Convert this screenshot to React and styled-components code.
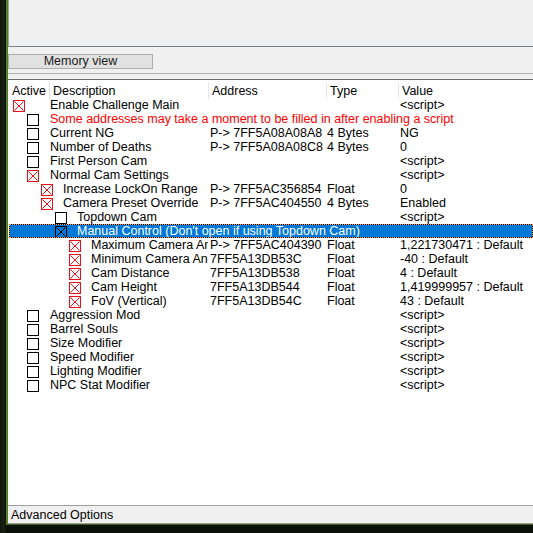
import React from 'react';
import styled, { createGlobalStyle } from 'styled-components';

const GlobalStyle = createGlobalStyle`
  html, body {
    margin: 0;
    padding: 0;
    background: #0b1108;
  }
  body {
    font-family: "Liberation Sans", Arial, sans-serif;
    font-size: 12.5px;
    color: #000;
  }
`;

const COLS = '41px 159px 118px 72px 1fr';

const Desktop = styled.div`
  width: 533px;
  height: 533px;
  overflow: hidden;
  background: linear-gradient(90deg, #10160c 0px, #1a2212 4px, #0b1108 6px);
`;

const Window = styled.div`
  margin-left: 6px;
  width: 527px;
  height: 525px;
  border-left: 2px solid #56802a;
  border-bottom: 1px solid #3f5f1e;
  background: #f0f0f0;
  display: flex;
  flex-direction: column;
  box-sizing: border-box;
`;

const TopPanel = styled.div`
  height: 46px;
  flex: none;
  border-left: 1px solid #a0a0a0;
  border-bottom: 1px solid #7b8189;
  background: #f0f0f0;
`;

const Toolbar = styled.div`
  flex: none;
  height: 27px;
  padding-top: 7px;
  box-sizing: border-box;
  border-bottom: 1px solid #b0b0b0;
`;

const Button = styled.div`
  width: 145px;
  height: 15px;
  box-sizing: border-box;
  border: 1px solid #adadad;
  background: #e1e1e1;
  display: flex;
  align-items: center;
  justify-content: center;
  line-height: 13px;
  color: #1a1a1a;
`;

const Splitter = styled.div`
  flex: none;
  height: 5px;
  border-bottom: 1px solid #6a6a6a;
`;

const List = styled.div`
  flex: 1;
  background: #fff;
  overflow: hidden;
`;

const Header = styled.div`
  display: grid;
  grid-template-columns: ${COLS};
  height: 18px;
  align-items: center;
`;

const HeadCell = styled.div`
  height: 16px;
  margin-top: 3px;
  padding-left: ${p => (p.$first ? 4 : 3)}px;
  border-left: ${p => (p.$first ? 'none' : '1px solid #e3e3e3')};
  line-height: 16px;
  white-space: nowrap;
  overflow: hidden;
`;

const Row = styled.div`
  display: grid;
  grid-template-columns: ${COLS};
  height: 14px;
  line-height: 14px;
  box-sizing: border-box;
  margin-left: ${p => (p.$selected ? 1 : 0)}px;
  color: ${p => (p.$selected ? '#fff' : '#000')};
  border: ${p => (p.$selected ? '1px dotted #f3a13a' : 'none')};
  background: ${p =>
    p.$selected
      ? 'linear-gradient(#0078d7, #0078d7) padding-box, linear-gradient(#000, #000) border-box'
      : 'transparent'};
`;

const DescCell = styled.div`
  grid-column: ${p => (p.$span ? '1 / -1' : '1 / 3')};
  display: flex;
  align-items: flex-start;
  padding-left: ${p => p.$indent}px;
  overflow: hidden;
  white-space: nowrap;
  margin-top: ${p => (p.$selected ? -1 : 0)}px;
`;

const Label = styled.span`
  margin-left: ${p => p.$gap}px;
  color: ${p => (p.$note ? '#ff0000' : 'inherit')};
`;

const Cell = styled.div`
  padding-left: ${p => p.$pad}px;
  white-space: nowrap;
  overflow: hidden;
`;

const Box = styled.span`
  flex: none;
  width: 12px;
  height: 12px;
  margin-top: 2px;
  box-sizing: border-box;
  border: 1px solid ${p => p.$color};
  background: ${p => (p.$selected ? 'transparent' : '#fff')};
  display: block;
  svg {
    display: block;
  }
`;

const Footer = styled.div`
  flex: none;
  height: 19px;
  box-sizing: border-box;
  border-top: 1px solid #a0a0a0;
  border-bottom: 1px solid #9a9a9a;
  padding-left: 3px;
  line-height: 18px;
  background: #f0f0f0;
`;

function Check({ checked, selected }) {
  const color = selected ? '#000' : checked ? '#e5141a' : '#000';
  return (
    <Box $color={color} $selected={selected}>
      {checked && (
        <svg width="10" height="10" viewBox="0 0 10 10">
          <path d="M0.5 0.5 L9.5 9.5 M9.5 0.5 L0.5 9.5" stroke={color} strokeWidth="1" />
        </svg>
      )}
    </Box>
  );
}

const rows = [
  { level: 0, checked: true, desc: 'Enable Challenge Main', value: '<script>' },
  { level: 1, note: true, desc: 'Some addresses may take a moment to be filled in after enabling a script' },
  { level: 1, desc: 'Current NG', address: 'P-> 7FF5A08A08A8', type: '4 Bytes', value: 'NG' },
  { level: 1, desc: 'Number of Deaths', address: 'P-> 7FF5A08A08C8', type: '4 Bytes', value: '0' },
  { level: 1, desc: 'First Person Cam', value: '<script>' },
  { level: 1, checked: true, desc: 'Normal Cam Settings', value: '<script>' },
  { level: 2, checked: true, desc: 'Increase LockOn Range', address: 'P-> 7FF5AC356854', type: 'Float', value: '0' },
  { level: 2, checked: true, desc: 'Camera Preset Override', address: 'P-> 7FF5AC404550', type: '4 Bytes', value: 'Enabled' },
  { level: 3, desc: 'Topdown Cam', value: '<script>' },
  { level: 3, checked: true, selected: true, desc: "Manual Control (Don't open if using Topdown Cam)" },
  { level: 4, checked: true, desc: 'Maximum Camera Angle', address: 'P-> 7FF5AC404390', type: 'Float', value: '1,221730471 : Default' },
  { level: 4, checked: true, desc: 'Minimum Camera Angle', address: '7FF5A13DB53C', type: 'Float', value: '-40 : Default' },
  { level: 4, checked: true, desc: 'Cam Distance', address: '7FF5A13DB538', type: 'Float', value: '4 : Default' },
  { level: 4, checked: true, desc: 'Cam Height', address: '7FF5A13DB544', type: 'Float', value: '1,419999957 : Default' },
  { level: 4, checked: true, desc: 'FoV (Vertical)', address: '7FF5A13DB54C', type: 'Float', value: '43 : Default' },
  { level: 1, desc: 'Aggression Mod', value: '<script>' },
  { level: 1, desc: 'Barrel Souls', value: '<script>' },
  { level: 1, desc: 'Size Modifier', value: '<script>' },
  { level: 1, desc: 'Speed Modifier', value: '<script>' },
  { level: 1, desc: 'Lighting Modifier', value: '<script>' },
  { level: 1, desc: 'NPC Stat Modifier', value: '<script>' },
];

function Entry({ row }) {
  const boxX = 5 + 14 * row.level;
  const textX = Math.max(42, boxX + 22);
  const span = row.note || row.selected;
  return (
    <Row $selected={row.selected}>
      <DescCell $indent={boxX - (row.selected ? 2 : 0)} $span={span} $selected={row.selected}>
        <Check checked={row.checked} selected={row.selected} />
        <Label $gap={textX - boxX - 12} $note={row.note}>{row.desc}</Label>
      </DescCell>
      {!span && (
        <>
          <Cell $pad={2}>{row.address}</Cell>
          <Cell $pad={1}>{row.type}</Cell>
          <Cell $pad={2}>{row.value}</Cell>
        </>
      )}
    </Row>
  );
}

export default function App() {
  return (
    <>
      <GlobalStyle />
      <Desktop>
        <Window>
          <TopPanel />
          <Toolbar>
            <Button>Memory view</Button>
          </Toolbar>
          <Splitter />
          <List>
            <Header>
              <HeadCell $first>Active</HeadCell>
              <HeadCell>Description</HeadCell>
              <HeadCell>Address</HeadCell>
              <HeadCell>Type</HeadCell>
              <HeadCell>Value</HeadCell>
            </Header>
            {rows.map(row => (
              <Entry key={row.desc} row={row} />
            ))}
          </List>
          <Footer>Advanced Options</Footer>
        </Window>
      </Desktop>
    </>
  );
}
